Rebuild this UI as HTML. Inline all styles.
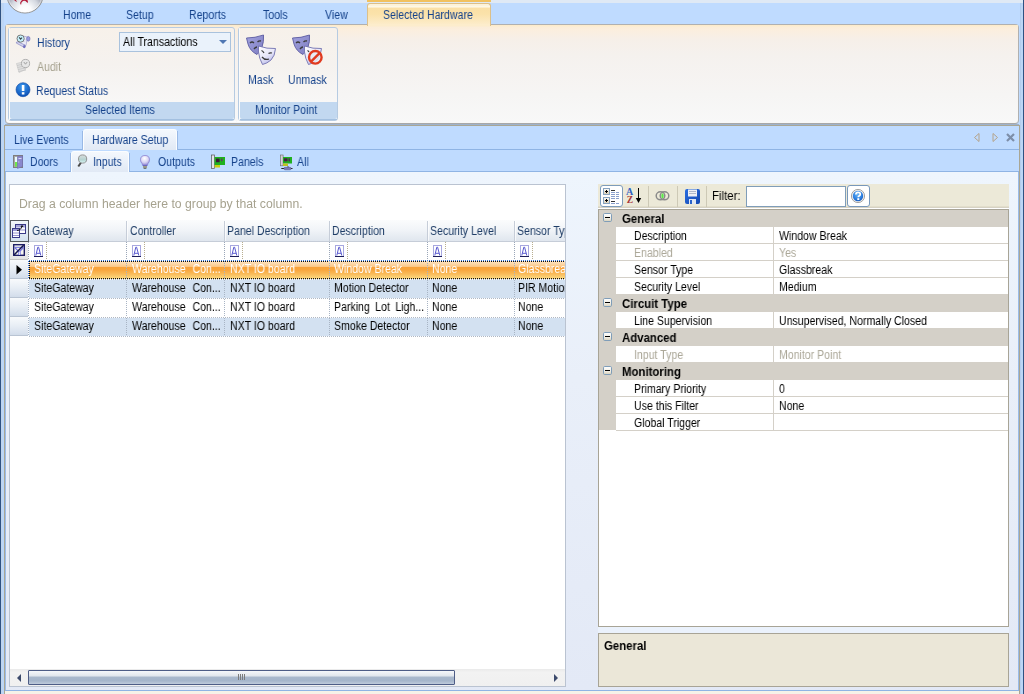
<!DOCTYPE html>
<html><head><meta charset="utf-8">
<style>
*{margin:0;padding:0;box-sizing:border-box}
html,body{-webkit-font-smoothing:antialiased;width:1024px;height:694px;overflow:hidden;background:#bfdbff;font-family:"Liberation Sans",sans-serif;font-size:11px;color:#000}
.a{position:absolute}
.t{position:absolute;white-space:nowrap;line-height:13px;font-size:12px;transform-origin:0 0;transform:scaleX(0.88);will-change:transform}
.bd{font-weight:bold;transform:scaleX(0.95)}
.b{color:#15428b}
svg{position:absolute;overflow:visible}
</style></head><body>

<div class="a" style="left:0px;top:0px;width:1024px;height:694px;background:#bfdbff"></div>
<div class="a" style="left:0px;top:0px;width:1024px;height:3px;background:#dfe9f5"></div>
<div class="a" style="left:1px;top:3px;width:3px;height:691px;background:#bcd6f6"></div>
<div class="a" style="left:1px;top:3px;width:1px;height:691px;background:#c0d4ec"></div>
<div class="a" style="left:1020px;top:3px;width:3px;height:691px;background:#bcd6f6"></div>
<div class="a" style="left:1020px;top:3px;width:1px;height:691px;background:#b4cdee"></div>
<div class="a" style="left:0px;top:0px;width:1px;height:694px;background:#2f5282"></div>
<div class="a" style="left:1023px;top:0px;width:1px;height:694px;background:#2f5282"></div>
<svg style="left:0;top:0" width="50" height="16">
<defs><radialGradient id="lg" cx="0.5" cy="0.95" r="0.5" fx="0.5" fy="0.95"><stop offset="0" stop-color="#ffffff"/><stop offset="0.35" stop-color="#fbfbfc"/><stop offset="0.8" stop-color="#d4d8e0"/><stop offset="1" stop-color="#b4b8c4"/></radialGradient></defs>
<circle cx="25" cy="-5" r="18" fill="url(#lg)" stroke="#909090" stroke-width="1"/><circle cx="25" cy="-5" r="17" fill="none" stroke="#ffffff" stroke-opacity="0.6" stroke-width="0.8"/>
<path d="M13 -1 Q15 1 17 2 L16 0 Z" fill="#b0203c"/>
<path d="M20 3 Q22 -1 25 -2 Q28 -1 28 3 L26.5 2 Q25 0 23 1 Q21 2 21 5 Z" fill="#b41c3a"/>
</svg>
<div class="t b" style="left:63px;top:9px;">Home</div>
<div class="t b" style="left:126px;top:9px;">Setup</div>
<div class="t b" style="left:189px;top:9px;">Reports</div>
<div class="t b" style="left:263px;top:9px;">Tools</div>
<div class="t b" style="left:325px;top:9px;">View</div>
<div class="a" style="left:367px;top:0px;width:124px;height:2px;background:#f1c15f"></div>
<div class="a" style="left:5px;top:124px;width:1014px;height:1px;background:#9db2cd"></div>
<div class="a" style="left:5px;top:24px;width:1014px;height:100px;border:1px solid #b0b0b0;border-bottom:1px solid #a8a8a8;border-radius:4px;background:linear-gradient(#fdeccc 0px,#fbeedd 4px,#f6efe8 14px,#f5f1ee 30px,#f6f5f4 70px,#f8f8f8)"></div>
<div class="a" style="left:6px;top:25px;width:1012px;height:3px;background:linear-gradient(#fdebc8,#fbeedd)"></div>
<div class="a" style="left:367px;top:3px;width:124px;height:23px;border:1px solid #dcc08a;border-bottom:none;border-radius:3px 3px 0 0;background:linear-gradient(#fdf2d6 0px,#fdf4dc 2px,#fffbef 3px,#fae0a6 4px,#fbe2aa 10px,#fce9c0 17px,#fdeecf 22px)"></div>
<div class="a" style="left:368px;top:24px;width:122px;height:2px;background:#fdedcc"></div>
<div class="t b" style="left:383px;top:9px;">Selected Hardware</div>
<div class="a" style="left:8px;top:27px;width:227px;height:94px;border:1px solid #b6cbe2;border-radius:3px;background:linear-gradient(#f7f1ea,#f5f2ef 40%,#f8f7f6 80%,#f9f9f9);overflow:hidden"></div>
<div class="a" style="left:9px;top:28px;width:1px;height:92px;background:#fdfdfd;opacity:0.8"></div>
<div class="a" style="left:10px;top:102px;width:224px;height:17px;background:#c2d8f0;border-radius:0 0 2px 2px"></div>
<div class="a" style="left:10px;top:119px;width:224px;height:1px;background:#a3c0e0"></div>
<div class="a" style="left:7px;top:121px;width:229px;height:1px;background:#fdfdfd"></div>
<div class="t b" style="left:85px;top:104px;">Selected Items</div>
<div class="a" style="left:238px;top:27px;width:100px;height:94px;border:1px solid #b6cbe2;border-radius:3px;background:linear-gradient(#f7f1ea,#f5f2ef 40%,#f8f7f6 80%,#f9f9f9);overflow:hidden"></div>
<div class="a" style="left:239px;top:28px;width:1px;height:92px;background:#fdfdfd;opacity:0.8"></div>
<div class="a" style="left:240px;top:102px;width:97px;height:17px;background:#c2d8f0;border-radius:0 0 2px 2px"></div>
<div class="a" style="left:240px;top:119px;width:97px;height:1px;background:#a3c0e0"></div>
<div class="a" style="left:237px;top:121px;width:102px;height:1px;background:#fdfdfd"></div>
<div class="t b" style="left:255px;top:104px;">Monitor Point</div>
<div class="t b" style="left:37px;top:37px;">History</div>
<div class="t " style="left:37px;top:61px;color:#a6a28f">Audit</div>
<div class="t b" style="left:36px;top:85px;">Request Status</div>
<div class="a" style="left:119px;top:32px;width:112px;height:20px;border:1px solid #a9c2dd;background:#eaf2fb"></div>
<div class="t " style="left:123px;top:36px;">All Transactions</div>
<svg style="left:219px;top:40px" width="9" height="5"><path d="M0 0 H8 L4 4 Z" fill="#4f77b3"/></svg>
<svg style="left:12px;top:30px" width="24" height="24">
<path d="M8 5.5 L15.5 7 L14 15.5 L7 13.5 Z" fill="#eeeef8" stroke="#a8a8d0" stroke-width="0.8"/>
<path d="M10 9 L14 10 M9.5 11 L13.5 12" stroke="#c8c8e4" stroke-width="0.6"/>
<ellipse cx="16.3" cy="8.8" rx="1.7" ry="2.4" fill="#9a9ae0" stroke="#6a6ab0" stroke-width="0.6"/>
<path d="M4.2 13 L11.5 17 Q13 17.8 13.2 16.2 L13 15 L6 11.8 Q4.3 11.5 4.2 13 Z" fill="#d4d4ee" stroke="#8a8ac4" stroke-width="0.7"/>
<ellipse cx="12.3" cy="16.6" rx="1.3" ry="1.6" fill="#7070c0"/>
<circle cx="8.6" cy="8.6" r="3.6" fill="#c4f0fa" stroke="#6e6e6e" stroke-width="0.9"/>
<path d="M7.2 7.3 L8.6 9.1 L10 7.7" fill="none" stroke="#3a4448" stroke-width="1.1"/>
</svg>
<svg style="left:15px;top:58px" width="18" height="18">
<path d="M1.5 5.5 L8 4 L11 11 L4 14.5 Z" fill="#e2e2e2" stroke="#c8c8c8" stroke-width="0.7"/>
<path d="M2 7.5 L8.5 6 M2.5 9.5 L9.5 8 M3 11.5 L10.5 10 M3.5 13.5 L11 12" stroke="#c4c4c4" stroke-width="0.8"/>
<circle cx="10.5" cy="5.5" r="4.1" fill="#e6e6e6" stroke="#a8a8a8" stroke-width="0.9"/>
<path d="M8.8 4 L10.5 6.2 L12.2 4" fill="none" stroke="#989898" stroke-width="0.9"/>
</svg>
<svg style="left:15px;top:82px" width="16" height="16">
<defs><radialGradient id="rs" cx="0.45" cy="0.3" r="0.7"><stop offset="0" stop-color="#3d9af0"/><stop offset="1" stop-color="#0a4fb5"/></radialGradient></defs>
<circle cx="8" cy="7.7" r="7" fill="url(#rs)" stroke="#0b4aa6" stroke-width="0.6"/>
<rect x="6.8" y="3" width="2.6" height="6" fill="#ffffff"/>
<rect x="6.8" y="10.2" width="2.6" height="2.3" fill="#ffffff"/>
</svg>
<svg style="left:244px;top:32px" width="36" height="36">
<defs>
<linearGradient id="mb244" x1="0" y1="0" x2="1" y2="1"><stop offset="0" stop-color="#a4a4e0"/><stop offset="1" stop-color="#7c7cc0"/></linearGradient>
<linearGradient id="mf244" x1="0" y1="0" x2="0.6" y2="1"><stop offset="0" stop-color="#ffffff"/><stop offset="0.6" stop-color="#e6e6f8"/><stop offset="1" stop-color="#b8b8e8"/></linearGradient>
</defs>
<path d="M2.5 6 Q11 6 19.5 3 Q20 10 18 15 Q16 20 13 22.5 Q6 19 4 12 Z" fill="url(#mb244)" stroke="#5a5aa0" stroke-width="0.9"/>
<path d="M6 11 Q8 9 10 11" fill="none" stroke="#3a3a3a" stroke-width="1.3"/>
<path d="M13.5 10 Q15 8.5 17 9" fill="none" stroke="#3a3a3a" stroke-width="1.3"/>
<path d="M10 17 Q11.5 15 13 15" fill="none" stroke="#3a3a3a" stroke-width="1.3"/>
<path d="M14.5 14 Q23 17 31.5 16.5 Q31 24 27 28 Q23 31.5 18.5 32.5 Q15 26 14.5 20 Z" fill="url(#mf244)" stroke="#7070b0" stroke-width="0.9"/>
<path d="M17.5 18.5 Q19 19 20 21" fill="none" stroke="#3a3a3a" stroke-width="1.2"/>
<path d="M24.5 21.5 Q26 20.5 28 21" fill="none" stroke="#3a3a3a" stroke-width="1.2"/>
<path d="M18 25 Q21 28.5 25 27" fill="none" stroke="#3a3a3a" stroke-width="1.3"/>
</svg>
<svg style="left:290px;top:32px" width="36" height="36">
<defs>
<linearGradient id="mb290" x1="0" y1="0" x2="1" y2="1"><stop offset="0" stop-color="#a4a4e0"/><stop offset="1" stop-color="#7c7cc0"/></linearGradient>
<linearGradient id="mf290" x1="0" y1="0" x2="0.6" y2="1"><stop offset="0" stop-color="#ffffff"/><stop offset="0.6" stop-color="#e6e6f8"/><stop offset="1" stop-color="#b8b8e8"/></linearGradient>
</defs>
<path d="M2.5 6 Q11 6 19.5 3 Q20 10 18 15 Q16 20 13 22.5 Q6 19 4 12 Z" fill="url(#mb290)" stroke="#5a5aa0" stroke-width="0.9"/>
<path d="M6 11 Q8 9 10 11" fill="none" stroke="#3a3a3a" stroke-width="1.3"/>
<path d="M13.5 10 Q15 8.5 17 9" fill="none" stroke="#3a3a3a" stroke-width="1.3"/>
<path d="M10 17 Q11.5 15 13 15" fill="none" stroke="#3a3a3a" stroke-width="1.3"/>
<path d="M14.5 14 Q23 17 31.5 16.5 Q31 24 27 28 Q23 31.5 18.5 32.5 Q15 26 14.5 20 Z" fill="url(#mf290)" stroke="#7070b0" stroke-width="0.9"/>
<path d="M17.5 18.5 Q18.5 19 19 20" fill="none" stroke="#3a3a3a" stroke-width="1.2"/>
<circle cx="25.3" cy="25.3" r="6.3" fill="#e8ecf4" fill-opacity="0.85" stroke="#e03a20" stroke-width="2.4"/>
<path d="M20.8 29.8 L29.8 20.8" stroke="#e03a20" stroke-width="2.4"/>
</svg>
<div class="t b" style="left:248px;top:74px;">Mask</div>
<div class="t b" style="left:288px;top:74px;">Unmask</div>
<div class="a" style="left:4px;top:125px;width:1016px;height:569px;background:#a9a694"></div>
<div class="a" style="left:5px;top:126px;width:1014px;height:568px;background:#bfdbff"></div>
<div class="a" style="left:5px;top:149px;width:1014px;height:1px;background:#8fb4e4"></div>
<div class="a" style="left:83px;top:129px;width:94px;height:21px;border:1px solid #fbfdff;border-bottom:none;border-radius:3px 3px 0 0;background:linear-gradient(#f4f8fd,#e8eff9 60%,#e1e9f5)"></div>
<div class="a" style="left:82px;top:131px;width:1px;height:19px;background:#99b9e6"></div>
<div class="a" style="left:177px;top:131px;width:1px;height:19px;background:#99b9e6"></div>
<div class="t b" style="left:14px;top:134px;">Live Events</div>
<div class="t b" style="left:92px;top:134px;">Hardware Setup</div>
<svg style="left:973px;top:132px" width="46" height="12">
<path d="M6 1.5 L1.5 5.5 L6 9.5 Z" fill="none" stroke="#b4a38a" stroke-width="1"/>
<path d="M20 1.5 L24.5 5.5 L20 9.5 Z" fill="none" stroke="#b4a38a" stroke-width="1"/>
<path d="M34 2 L41 9 M41 2 L34 9" stroke="#7d8ea8" stroke-width="2.2"/>
</svg>
<div class="a" style="left:5px;top:171px;width:1014px;height:1px;background:#8fb4e4"></div>
<div class="a" style="left:71px;top:151px;width:58px;height:21px;border:1px solid #fbfdff;border-bottom:none;border-radius:3px 3px 0 0;background:linear-gradient(#f4f8fd,#e8eff9 60%,#e1e9f5)"></div>
<div class="a" style="left:70px;top:153px;width:1px;height:18px;background:#99b9e6"></div>
<div class="a" style="left:129px;top:153px;width:1px;height:18px;background:#99b9e6"></div>
<div class="t b" style="left:30px;top:156px;">Doors</div>
<div class="t b" style="left:93px;top:156px;">Inputs</div>
<div class="t b" style="left:158px;top:156px;">Outputs</div>
<div class="t b" style="left:231px;top:156px;">Panels</div>
<div class="t b" style="left:297px;top:156px;">All</div>
<svg style="left:13px;top:155px" width="12" height="15">
<rect x="0.5" y="0.5" width="9" height="12" fill="#a8a8a8" stroke="#7e7e7e" stroke-width="1"/>
<rect x="2" y="2" width="2.5" height="5" fill="#e8fbff"/>
<rect x="2" y="7" width="2.5" height="4.5" fill="#6ee84a"/>
<path d="M4.5 1.5 L9.5 1 L9.5 11.5 L4.5 13.5 Z" fill="#8a88cc" stroke="#6a68b0" stroke-width="0.5"/>
<rect x="5.5" y="3" width="3" height="1" fill="#d8d8f4"/>
<rect x="5.3" y="6.5" width="1" height="1" fill="#e0e0e0"/>
</svg>
<svg style="left:76px;top:153px" width="14" height="16">
<defs><linearGradient id="mg" x1="0" y1="0" x2="0" y2="1"><stop offset="0" stop-color="#d8dcdc"/><stop offset="0.6" stop-color="#b4d2d0"/><stop offset="1" stop-color="#dcfbfa"/></linearGradient></defs>
<path d="M5 9.5 L2.3 13.5" stroke="#4a4a4a" stroke-width="2"/>
<circle cx="6.6" cy="6" r="4.1" fill="url(#mg)" stroke="#8a8a8a" stroke-width="0.9"/>
</svg>
<svg style="left:140px;top:155px" width="11" height="15">
<defs><radialGradient id="bl" cx="0.45" cy="0.3" r="0.7"><stop offset="0" stop-color="#ffffff"/><stop offset="0.6" stop-color="#d8d4f4"/><stop offset="1" stop-color="#9890d8"/></radialGradient></defs>
<path d="M5 0.5 Q9.5 0.5 9.5 4.8 Q9.5 7 7.8 8.8 L7.5 10 L2.5 10 L2.2 8.8 Q0.5 7 0.5 4.8 Q0.5 0.5 5 0.5 Z" fill="url(#bl)" stroke="#8a82d0" stroke-width="0.8"/>
<rect x="2.6" y="10" width="4.8" height="1" fill="#6a66c0"/>
<rect x="3" y="11" width="4" height="1.8" fill="#9c9a88"/>
<rect x="3.6" y="12.8" width="2.8" height="0.9" fill="#4a4a40"/>
</svg>
<svg style="left:211px;top:155px" width="15" height="14">
<rect x="0.5" y="0" width="3" height="13.5" fill="#e4e4e8" stroke="#555" stroke-width="0.7"/>
<rect x="3.6" y="2" width="10.4" height="8" fill="#1fb01f"/>
<rect x="3.6" y="10" width="5.4" height="2.5" fill="#c8d010"/>
<rect x="5" y="3.6" width="3.6" height="3.6" fill="#3a1838"/>
<rect x="10" y="3.6" width="1.4" height="2.6" fill="#6a2a6a"/>
</svg>
<svg style="left:280px;top:155px" width="14" height="15">
<rect x="0.5" y="0" width="2.6" height="10.8" fill="#d8d0d8" stroke="#666" stroke-width="0.6"/>
<rect x="3" y="2" width="9" height="6.5" fill="#20b020"/>
<rect x="3" y="8.5" width="5" height="2.5" fill="#c0c020"/>
<rect x="4" y="3.3" width="3.5" height="3" fill="#4a1a48"/>
<rect x="8.5" y="3.3" width="1.4" height="3" fill="#5a2058"/>
<path d="M8 11 L8 13" stroke="#333" stroke-width="0.8"/>
<path d="M1.3 13.5 L12.5 13.5" stroke="#222" stroke-width="1"/>
<rect x="4" y="12.3" width="7" height="2.5" rx="1" fill="#7a78b8" stroke="#54527a" stroke-width="0.5"/>
</svg>
<div class="a" style="left:5px;top:172px;width:1014px;height:518px;background:linear-gradient(#eef5fd,#e9eff9 40%,#e3e9f6)"></div>
<div class="a" style="left:5px;top:172px;width:1px;height:518px;background:#99bbe8"></div>
<div class="a" style="left:1018px;top:172px;width:1px;height:518px;background:#99bbe8"></div>
<div class="a" style="left:5px;top:690px;width:1014px;height:1px;background:#8fb4e4"></div>
<div class="a" style="left:5px;top:691px;width:1014px;height:3px;background:#f6f2e8"></div>
<div class="a" style="left:9px;top:184px;width:557px;height:503px;border:1px solid #bac3d1;background:#fff"></div>
<div class="t " style="left:19px;top:198px;color:#a6a28f;transform:scaleX(1.02)">Drag a column header here to group by that column.</div>
<div class="a" style="left:10px;top:220px;width:555px;height:22px;background:linear-gradient(#fbfcfd,#f1f4f8 45%,#e3e9f0 85%,#dfe5ee)"></div>
<div class="a" style="left:10px;top:241px;width:555px;height:1px;background:#c6cdd8"></div>
<div class="a" style="left:126px;top:221px;width:1px;height:20px;background:#c6cdd8"></div>
<div class="a" style="left:127px;top:221px;width:1px;height:20px;background:#ffffff;opacity:0.7"></div>
<div class="a" style="left:224px;top:221px;width:1px;height:20px;background:#c6cdd8"></div>
<div class="a" style="left:225px;top:221px;width:1px;height:20px;background:#ffffff;opacity:0.7"></div>
<div class="a" style="left:329px;top:221px;width:1px;height:20px;background:#c6cdd8"></div>
<div class="a" style="left:330px;top:221px;width:1px;height:20px;background:#ffffff;opacity:0.7"></div>
<div class="a" style="left:427px;top:221px;width:1px;height:20px;background:#c6cdd8"></div>
<div class="a" style="left:428px;top:221px;width:1px;height:20px;background:#ffffff;opacity:0.7"></div>
<div class="a" style="left:514px;top:221px;width:1px;height:20px;background:#c6cdd8"></div>
<div class="a" style="left:515px;top:221px;width:1px;height:20px;background:#ffffff;opacity:0.7"></div>
<div class="a" style="left:10px;top:220px;width:19px;height:22px;border:1px solid #555a60;background:linear-gradient(#f2f6fa,#d4e2ef)"></div>
<svg style="left:11px;top:222px" width="17" height="18">
<rect x="4.5" y="2.5" width="10" height="9" fill="#ffffff" stroke="#3a3a88" stroke-width="1"/>
<rect x="5" y="3" width="9" height="2.5" fill="#a4a4d8"/>
<path d="M5 8 H14" stroke="#7878c0" stroke-width="0.8"/>
<rect x="1.5" y="6.5" width="7" height="9" fill="#ffffff" stroke="#3a3a88" stroke-width="1"/>
<rect x="2" y="7" width="6" height="2" fill="#9a9ad4"/>
<path d="M2 11 H8 M2 13.5 H8" stroke="#7878c0" stroke-width="0.8"/>
<path d="M6 8.5 Q10 8.5 11 4" fill="none" stroke="#1a1a1a" stroke-width="1"/>
<path d="M9.5 5 L11 2.8 L12.6 5 Z" fill="#1a1a1a"/>
</svg>
<div class="a" style="left:10px;top:220px;width:555px;height:22px;overflow:hidden">
<div class="t" style="left:22px;top:5px;color:#1f3d66">Gateway</div>
<div class="t" style="left:120px;top:5px;color:#1f3d66">Controller</div>
<div class="t" style="left:217px;top:5px;color:#1f3d66">Panel Description</div>
<div class="t" style="left:322px;top:5px;color:#1f3d66">Description</div>
<div class="t" style="left:420px;top:5px;color:#1f3d66">Security Level</div>
<div class="t" style="left:507px;top:5px;color:#1f3d66">Sensor Type</div>
</div>
<div class="a" style="left:10px;top:242px;width:18px;height:18px;background:linear-gradient(#f2f2f2,#e4e4e4);border-bottom:1px solid #c4c4c4"></div>
<svg style="left:13px;top:244px" width="13" height="13">
<rect x="0.7" y="0.7" width="10.6" height="10.6" fill="#f6f5ee" stroke="#1e1e66" stroke-width="1.4"/>
<path d="M1.4 3.3 H10.6" stroke="#6464d8" stroke-width="1"/>
<path d="M2 3.8 L5.8 7.6 V11 M10.2 3.8 L7 7.2 V11" fill="none" stroke="#6a6ae0" stroke-width="1.2"/>
<rect x="5.8" y="7.6" width="1.2" height="3.4" fill="#dcdcf8"/>
<path d="M1 11 L10.6 1.2" stroke="#16164a" stroke-width="1.5"/>
</svg>
<div class="a" style="left:28px;top:242px;width:1px;height:18px;background:repeating-linear-gradient(#9aa6b8 0 1px,transparent 1px 2px)"></div>
<div class="a" style="left:46px;top:242px;width:1px;height:18px;background:repeating-linear-gradient(#b8ae90 0 1px,transparent 1px 2px)"></div>
<svg style="left:34px;top:245px" width="10" height="12">
<rect x="0.5" y="0.5" width="8" height="11" fill="#ffffff" stroke="#a8a8e0" stroke-width="1"/>
<path d="M1.8 10.5 L3.8 2.2 L4.6 2.2 L6.8 10.5 M2.5 8.3 H6.2" fill="none" stroke="#5a5ad0" stroke-width="1"/>
<rect x="0" y="11" width="9" height="1" fill="#1e1e5a"/>
</svg>
<div class="a" style="left:126px;top:242px;width:1px;height:18px;background:repeating-linear-gradient(#9aa6b8 0 1px,transparent 1px 2px)"></div>
<div class="a" style="left:144px;top:242px;width:1px;height:18px;background:repeating-linear-gradient(#b8ae90 0 1px,transparent 1px 2px)"></div>
<svg style="left:132px;top:245px" width="10" height="12">
<rect x="0.5" y="0.5" width="8" height="11" fill="#ffffff" stroke="#a8a8e0" stroke-width="1"/>
<path d="M1.8 10.5 L3.8 2.2 L4.6 2.2 L6.8 10.5 M2.5 8.3 H6.2" fill="none" stroke="#5a5ad0" stroke-width="1"/>
<rect x="0" y="11" width="9" height="1" fill="#1e1e5a"/>
</svg>
<div class="a" style="left:224px;top:242px;width:1px;height:18px;background:repeating-linear-gradient(#9aa6b8 0 1px,transparent 1px 2px)"></div>
<div class="a" style="left:242px;top:242px;width:1px;height:18px;background:repeating-linear-gradient(#b8ae90 0 1px,transparent 1px 2px)"></div>
<svg style="left:230px;top:245px" width="10" height="12">
<rect x="0.5" y="0.5" width="8" height="11" fill="#ffffff" stroke="#a8a8e0" stroke-width="1"/>
<path d="M1.8 10.5 L3.8 2.2 L4.6 2.2 L6.8 10.5 M2.5 8.3 H6.2" fill="none" stroke="#5a5ad0" stroke-width="1"/>
<rect x="0" y="11" width="9" height="1" fill="#1e1e5a"/>
</svg>
<div class="a" style="left:329px;top:242px;width:1px;height:18px;background:repeating-linear-gradient(#9aa6b8 0 1px,transparent 1px 2px)"></div>
<div class="a" style="left:347px;top:242px;width:1px;height:18px;background:repeating-linear-gradient(#b8ae90 0 1px,transparent 1px 2px)"></div>
<svg style="left:335px;top:245px" width="10" height="12">
<rect x="0.5" y="0.5" width="8" height="11" fill="#ffffff" stroke="#a8a8e0" stroke-width="1"/>
<path d="M1.8 10.5 L3.8 2.2 L4.6 2.2 L6.8 10.5 M2.5 8.3 H6.2" fill="none" stroke="#5a5ad0" stroke-width="1"/>
<rect x="0" y="11" width="9" height="1" fill="#1e1e5a"/>
</svg>
<div class="a" style="left:427px;top:242px;width:1px;height:18px;background:repeating-linear-gradient(#9aa6b8 0 1px,transparent 1px 2px)"></div>
<div class="a" style="left:445px;top:242px;width:1px;height:18px;background:repeating-linear-gradient(#b8ae90 0 1px,transparent 1px 2px)"></div>
<svg style="left:433px;top:245px" width="10" height="12">
<rect x="0.5" y="0.5" width="8" height="11" fill="#ffffff" stroke="#a8a8e0" stroke-width="1"/>
<path d="M1.8 10.5 L3.8 2.2 L4.6 2.2 L6.8 10.5 M2.5 8.3 H6.2" fill="none" stroke="#5a5ad0" stroke-width="1"/>
<rect x="0" y="11" width="9" height="1" fill="#1e1e5a"/>
</svg>
<div class="a" style="left:514px;top:242px;width:1px;height:18px;background:repeating-linear-gradient(#9aa6b8 0 1px,transparent 1px 2px)"></div>
<div class="a" style="left:532px;top:242px;width:1px;height:18px;background:repeating-linear-gradient(#b8ae90 0 1px,transparent 1px 2px)"></div>
<svg style="left:520px;top:245px" width="10" height="12">
<rect x="0.5" y="0.5" width="8" height="11" fill="#ffffff" stroke="#a8a8e0" stroke-width="1"/>
<path d="M1.8 10.5 L3.8 2.2 L4.6 2.2 L6.8 10.5 M2.5 8.3 H6.2" fill="none" stroke="#5a5ad0" stroke-width="1"/>
<rect x="0" y="11" width="9" height="1" fill="#1e1e5a"/>
</svg>
<div class="a" style="left:10px;top:260px;width:18px;height:19px;background:linear-gradient(#f8fafc,#e8eef5 45%,#d9e2ee 80%,#cfdae8)"></div>
<div class="a" style="left:10px;top:278px;width:18px;height:1px;background:#b9c4d3"></div>
<div class="a" style="left:29px;top:261px;width:536px;height:18px;background:linear-gradient(#fde4c4 0px,#fcd6a6 3px,#fbc888 5.5px,#f8a23a 6.5px,#f8a63e 9px,#f9bb5a 13px,#fcd67c 17px,#fde0a0 18px)"></div>
<div class="a" style="left:29px;top:261px;width:536px;height:1px;background:repeating-linear-gradient(90deg,#101010 0 1px,transparent 1px 2px)"></div>
<div class="a" style="left:29px;top:278px;width:536px;height:1px;background:repeating-linear-gradient(90deg,#101010 0 1px,transparent 1px 2px)"></div>
<div class="a" style="left:29px;top:260px;width:536px;height:1px;background:repeating-linear-gradient(90deg,#3a78d8 0 1px,transparent 1px 2px)"></div>
<div class="a" style="left:28px;top:261px;width:1px;height:18px;background:repeating-linear-gradient(#3a78d8 0 1px,transparent 1px 2px)"></div>
<div class="a" style="left:29px;top:261px;width:1px;height:18px;background:repeating-linear-gradient(#101010 0 1px,transparent 1px 2px)"></div>
<svg style="left:16px;top:265px" width="7" height="10"><path d="M0.5 0 L6 4.8 L0.5 9.6 Z" fill="#000"/></svg>
<div class="a" style="left:126px;top:261px;width:1px;height:18px;background:repeating-linear-gradient(#a8b4c4 0 1px,transparent 1px 2px)"></div>
<div class="a" style="left:224px;top:261px;width:1px;height:18px;background:repeating-linear-gradient(#a8b4c4 0 1px,transparent 1px 2px)"></div>
<div class="a" style="left:329px;top:261px;width:1px;height:18px;background:repeating-linear-gradient(#a8b4c4 0 1px,transparent 1px 2px)"></div>
<div class="a" style="left:427px;top:261px;width:1px;height:18px;background:repeating-linear-gradient(#a8b4c4 0 1px,transparent 1px 2px)"></div>
<div class="a" style="left:514px;top:261px;width:1px;height:18px;background:repeating-linear-gradient(#a8b4c4 0 1px,transparent 1px 2px)"></div>
<div class="a" style="left:29px;top:260px;width:536px;height:19px;overflow:hidden">
<div class="t" style="left:5px;top:3px;color:#ffffff">SiteGateway</div>
<div class="t" style="left:103px;top:3px;color:#ffffff">Warehouse<span style='word-spacing:4.5px'> </span>Con...</div>
<div class="t" style="left:201px;top:3px;color:#ffffff">NXT IO board</div>
<div class="t" style="left:305px;top:3px;color:#ffffff">Window Break</div>
<div class="t" style="left:403px;top:3px;color:#ffffff">None</div>
<div class="t" style="left:489px;top:3px;color:#ffffff">Glassbreak</div>
</div>
<div class="a" style="left:10px;top:279px;width:18px;height:19px;background:linear-gradient(#f8fafc,#e8eef5 45%,#d9e2ee 80%,#cfdae8)"></div>
<div class="a" style="left:10px;top:297px;width:18px;height:1px;background:#b9c4d3"></div>
<div class="a" style="left:29px;top:280px;width:536px;height:18px;background:#d3e1f1"></div>
<div class="a" style="left:29px;top:279px;width:536px;height:1px;background:repeating-linear-gradient(90deg,#b0b8c4 0 1px,transparent 1px 2px)"></div>
<div class="a" style="left:28px;top:280px;width:1px;height:18px;background:repeating-linear-gradient(#a8b4c4 0 1px,transparent 1px 2px)"></div>
<div class="a" style="left:126px;top:280px;width:1px;height:18px;background:repeating-linear-gradient(#a8b4c4 0 1px,transparent 1px 2px)"></div>
<div class="a" style="left:224px;top:280px;width:1px;height:18px;background:repeating-linear-gradient(#a8b4c4 0 1px,transparent 1px 2px)"></div>
<div class="a" style="left:329px;top:280px;width:1px;height:18px;background:repeating-linear-gradient(#a8b4c4 0 1px,transparent 1px 2px)"></div>
<div class="a" style="left:427px;top:280px;width:1px;height:18px;background:repeating-linear-gradient(#a8b4c4 0 1px,transparent 1px 2px)"></div>
<div class="a" style="left:514px;top:280px;width:1px;height:18px;background:repeating-linear-gradient(#a8b4c4 0 1px,transparent 1px 2px)"></div>
<div class="a" style="left:29px;top:279px;width:536px;height:19px;overflow:hidden">
<div class="t" style="left:5px;top:3px;color:#000">SiteGateway</div>
<div class="t" style="left:103px;top:3px;color:#000">Warehouse<span style='word-spacing:4.5px'> </span>Con...</div>
<div class="t" style="left:201px;top:3px;color:#000">NXT IO board</div>
<div class="t" style="left:305px;top:3px;color:#000">Motion Detector</div>
<div class="t" style="left:403px;top:3px;color:#000">None</div>
<div class="t" style="left:489px;top:3px;color:#000">PIR Motion</div>
</div>
<div class="a" style="left:10px;top:298px;width:18px;height:19px;background:linear-gradient(#f8fafc,#e8eef5 45%,#d9e2ee 80%,#cfdae8)"></div>
<div class="a" style="left:10px;top:316px;width:18px;height:1px;background:#b9c4d3"></div>
<div class="a" style="left:29px;top:299px;width:536px;height:18px;background:#ffffff"></div>
<div class="a" style="left:29px;top:298px;width:536px;height:1px;background:repeating-linear-gradient(90deg,#b0b8c4 0 1px,transparent 1px 2px)"></div>
<div class="a" style="left:28px;top:299px;width:1px;height:18px;background:repeating-linear-gradient(#a8b4c4 0 1px,transparent 1px 2px)"></div>
<div class="a" style="left:126px;top:299px;width:1px;height:18px;background:repeating-linear-gradient(#a8b4c4 0 1px,transparent 1px 2px)"></div>
<div class="a" style="left:224px;top:299px;width:1px;height:18px;background:repeating-linear-gradient(#a8b4c4 0 1px,transparent 1px 2px)"></div>
<div class="a" style="left:329px;top:299px;width:1px;height:18px;background:repeating-linear-gradient(#a8b4c4 0 1px,transparent 1px 2px)"></div>
<div class="a" style="left:427px;top:299px;width:1px;height:18px;background:repeating-linear-gradient(#a8b4c4 0 1px,transparent 1px 2px)"></div>
<div class="a" style="left:514px;top:299px;width:1px;height:18px;background:repeating-linear-gradient(#a8b4c4 0 1px,transparent 1px 2px)"></div>
<div class="a" style="left:29px;top:298px;width:536px;height:19px;overflow:hidden">
<div class="t" style="left:5px;top:3px;color:#000">SiteGateway</div>
<div class="t" style="left:103px;top:3px;color:#000">Warehouse<span style='word-spacing:4.5px'> </span>Con...</div>
<div class="t" style="left:201px;top:3px;color:#000">NXT IO board</div>
<div class="t" style="left:305px;top:3px;color:#000"><span style='word-spacing:2.8px'>Parking Lot Ligh...</span></div>
<div class="t" style="left:403px;top:3px;color:#000">None</div>
<div class="t" style="left:489px;top:3px;color:#000">None</div>
</div>
<div class="a" style="left:10px;top:317px;width:18px;height:19px;background:linear-gradient(#f8fafc,#e8eef5 45%,#d9e2ee 80%,#cfdae8)"></div>
<div class="a" style="left:10px;top:335px;width:18px;height:1px;background:#b9c4d3"></div>
<div class="a" style="left:29px;top:318px;width:536px;height:18px;background:#d3e1f1"></div>
<div class="a" style="left:29px;top:317px;width:536px;height:1px;background:repeating-linear-gradient(90deg,#b0b8c4 0 1px,transparent 1px 2px)"></div>
<div class="a" style="left:28px;top:318px;width:1px;height:18px;background:repeating-linear-gradient(#a8b4c4 0 1px,transparent 1px 2px)"></div>
<div class="a" style="left:126px;top:318px;width:1px;height:18px;background:repeating-linear-gradient(#a8b4c4 0 1px,transparent 1px 2px)"></div>
<div class="a" style="left:224px;top:318px;width:1px;height:18px;background:repeating-linear-gradient(#a8b4c4 0 1px,transparent 1px 2px)"></div>
<div class="a" style="left:329px;top:318px;width:1px;height:18px;background:repeating-linear-gradient(#a8b4c4 0 1px,transparent 1px 2px)"></div>
<div class="a" style="left:427px;top:318px;width:1px;height:18px;background:repeating-linear-gradient(#a8b4c4 0 1px,transparent 1px 2px)"></div>
<div class="a" style="left:514px;top:318px;width:1px;height:18px;background:repeating-linear-gradient(#a8b4c4 0 1px,transparent 1px 2px)"></div>
<div class="a" style="left:29px;top:317px;width:536px;height:19px;overflow:hidden">
<div class="t" style="left:5px;top:3px;color:#000">SiteGateway</div>
<div class="t" style="left:103px;top:3px;color:#000">Warehouse<span style='word-spacing:4.5px'> </span>Con...</div>
<div class="t" style="left:201px;top:3px;color:#000">NXT IO board</div>
<div class="t" style="left:305px;top:3px;color:#000">Smoke Detector</div>
<div class="t" style="left:403px;top:3px;color:#000">None</div>
<div class="t" style="left:489px;top:3px;color:#000">None</div>
</div>
<div class="a" style="left:29px;top:336px;width:536px;height:1px;background:repeating-linear-gradient(90deg,#b0b8c4 0 1px,transparent 1px 2px)"></div>
<div class="a" style="left:10px;top:669px;width:555px;height:17px;background:linear-gradient(#eaeaea,#f2f2f2 20%,#f0f0f0)"></div>
<svg style="left:16px;top:674px" width="6" height="8"><path d="M5 0 L1 4 L5 8 Z" fill="#3c4a6c"/></svg>
<svg style="left:554px;top:674px" width="6" height="8"><path d="M0 0 L4 4 L0 8 Z" fill="#3c4a6c"/></svg>
<div class="a" style="left:28px;top:670px;width:427px;height:15px;border:1px solid #4e5d86;border-radius:1px;background:linear-gradient(#f6f8fa,#e3e8ee 35%,#a9b8cc 50%,#a5b5ca 75%,#bfcbdb)"></div>
<div class="a" style="left:238px;top:674px;width:1px;height:6px;background:#7c7c7c"></div>
<div class="a" style="left:240px;top:674px;width:1px;height:6px;background:#7c7c7c"></div>
<div class="a" style="left:242px;top:674px;width:1px;height:6px;background:#7c7c7c"></div>
<div class="a" style="left:244px;top:674px;width:1px;height:6px;background:#7c7c7c"></div>
<div class="a" style="left:598px;top:184px;width:411px;height:23px;background:#ece9d8"></div>
<div class="a" style="left:598px;top:206px;width:411px;height:1px;background:#e2decb"></div>
<div class="a" style="left:598px;top:207px;width:411px;height:1px;background:#d6d2c4"></div>
<div class="a" style="left:598px;top:208px;width:411px;height:1px;background:#ffffff"></div>
<div class="a" style="left:598px;top:209px;width:411px;height:418px;background:#fff"></div>
<div class="a" style="left:600px;top:185px;width:23px;height:22px;border:1px solid #7d9cbb;border-radius:3px;background:#ffffff"></div>
<svg style="left:600px;top:185px" width="45" height="22" shape-rendering="crispEdges">
<defs><linearGradient id="pb" x1="0" y1="0" x2="0" y2="1"><stop offset="0" stop-color="#ffffff"/><stop offset="1" stop-color="#d8ccb0"/></linearGradient></defs>
<rect x="3.5" y="3.5" width="6" height="6" rx="1" fill="url(#pb)" stroke="#87a3c0" stroke-width="1"/>
<rect x="5" y="6" width="3" height="1" fill="#000"/><rect x="6" y="5" width="1" height="3" fill="#000"/>
<rect x="3.5" y="12.5" width="6" height="6" rx="1" fill="url(#pb)" stroke="#87a3c0" stroke-width="1"/>
<rect x="5" y="15" width="3" height="1" fill="#000"/><rect x="6" y="14" width="1" height="3" fill="#000"/>
<rect x="11" y="5" width="4" height="1" fill="#333"/>
<rect x="11" y="16" width="4" height="1" fill="#333"/>
<rect x="11" y="7" width="4" height="1" fill="#8aa0cc"/><rect x="16" y="7" width="3" height="1" fill="#8aa0cc"/>
<rect x="11" y="9" width="4" height="1" fill="#8aa0cc"/><rect x="16" y="9" width="3" height="1" fill="#8aa0cc"/>
<rect x="11" y="11" width="4" height="1" fill="#8aa0cc"/><rect x="16" y="11" width="3" height="1" fill="#8aa0cc"/>
<rect x="11" y="13" width="4" height="1" fill="#8aa0cc"/><rect x="16" y="13" width="3" height="1" fill="#8aa0cc"/>
<rect x="11" y="18" width="4" height="1" fill="#8aa0cc"/><rect x="16" y="18" width="3" height="1" fill="#8aa0cc"/>
</svg>
<svg style="left:625px;top:186px" width="18" height="18">
<text x="4.5" y="9" text-anchor="middle" font-family="Liberation Serif" font-weight="bold" font-size="10" fill="#2f5fc0">A</text>
<text x="4.8" y="17" text-anchor="middle" font-family="Liberation Serif" font-weight="bold" font-size="9.5" fill="#a83838">Z</text>
<rect x="13" y="2" width="1" height="13" fill="#000"/>
<path d="M10.8 12 L13.5 17 L16.2 12 Z" fill="#000"/>
</svg>
<div class="a" style="left:648px;top:186px;width:1px;height:21px;background:#cdc9b6"></div>
<div class="a" style="left:677px;top:186px;width:1px;height:21px;background:#cdc9b6"></div>
<div class="a" style="left:706px;top:186px;width:1px;height:21px;background:#cdc9b6"></div>
<svg style="left:655px;top:190px" width="17" height="12">
<ellipse cx="5.5" cy="5.8" rx="4.3" ry="4" fill="none" stroke="#8a8a8a" stroke-width="1.5"/>
<ellipse cx="9.5" cy="5.8" rx="4.3" ry="4" fill="none" stroke="#8a8a8a" stroke-width="1.5"/>
<ellipse cx="7.5" cy="5.8" rx="1.2" ry="2.6" fill="#5ae84a"/>
</svg>
<svg style="left:685px;top:189px" width="15" height="15">
<defs><linearGradient id="sv" x1="0" y1="0" x2="1" y2="1"><stop offset="0" stop-color="#2a6ee0"/><stop offset="1" stop-color="#1448b0"/></linearGradient></defs>
<rect x="0" y="0" width="15" height="15" rx="2" fill="url(#sv)"/>
<rect x="3" y="0.5" width="9" height="7" fill="#eef0f4"/>
<rect x="4" y="2" width="7" height="1" fill="#b0b8c8"/><rect x="4" y="4" width="7" height="1" fill="#b0b8c8"/>
<rect x="4" y="10" width="7" height="5" fill="#dfe6f2"/>
<rect x="5" y="11" width="2" height="4" fill="#2a62c8"/>
</svg>
<div class="t " style="left:712px;top:190px;transform:scaleX(0.95)">Filter:</div>
<div class="a" style="left:746px;top:186px;width:100px;height:21px;border:1px solid #7f9db9;background:#fff"></div>
<div class="a" style="left:847px;top:185px;width:23px;height:22px;border:1px solid #7898bb;border-radius:3px;background:#ffffff"></div>
<svg style="left:850px;top:188px" width="16" height="16">
<defs><radialGradient id="hg" cx="0.45" cy="0.35" r="0.65"><stop offset="0" stop-color="#6ab4f4"/><stop offset="0.7" stop-color="#2a7ee0"/><stop offset="1" stop-color="#1a5cc0"/></radialGradient></defs>
<circle cx="8" cy="8" r="6.6" fill="#eeeeee" stroke="#9a9a9a" stroke-width="0.9"/>
<circle cx="8" cy="8" r="5.2" fill="url(#hg)"/>
<path d="M5.9 6.4 Q5.9 4.3 8.1 4.3 Q10.3 4.3 10.3 6.2 Q10.3 7.3 9 7.9 Q8.3 8.3 8.3 9.2" fill="none" stroke="#ffffff" stroke-width="1.7"/>
<rect x="7.3" y="10.2" width="2" height="1.8" fill="#ffffff"/>
</svg>
<div class="a" style="left:599px;top:209px;width:409px;height:17px;background:#d4d0c8"></div>
<svg style="left:603px;top:213px" width="9" height="9">
<defs><linearGradient id="mb0" x1="0" y1="0" x2="0" y2="1"><stop offset="0" stop-color="#ffffff"/><stop offset="0.6" stop-color="#f0ede4"/><stop offset="1" stop-color="#d6cfb8"/></linearGradient></defs>
<rect x="0.5" y="0.5" width="8" height="8" rx="1.2" fill="url(#mb0)" stroke="#7f9db9" stroke-width="1"/>
<path d="M2 4.5 H7" stroke="#000" stroke-width="1"/>
</svg>
<div class="t bd" style="left:622px;top:213px;">General</div>
<div class="a" style="left:599px;top:226px;width:17px;height:17px;background:#d4d0c8"></div>
<div class="a" style="left:616px;top:226px;width:392px;height:1px;background:#d4d0c8"></div>
<div class="a" style="left:616px;top:243px;width:392px;height:1px;background:#d4d0c8"></div>
<div class="a" style="left:773px;top:227px;width:1px;height:16px;background:#d4d0c8"></div>
<div class="t " style="left:634px;top:230px;color:#000">Description</div>
<div class="t " style="left:779px;top:230px;color:#000">Window Break</div>
<div class="a" style="left:599px;top:243px;width:17px;height:17px;background:#d4d0c8"></div>
<div class="a" style="left:616px;top:243px;width:392px;height:1px;background:#d4d0c8"></div>
<div class="a" style="left:616px;top:260px;width:392px;height:1px;background:#d4d0c8"></div>
<div class="a" style="left:773px;top:244px;width:1px;height:16px;background:#d4d0c8"></div>
<div class="t " style="left:634px;top:247px;color:#aca899">Enabled</div>
<div class="t " style="left:779px;top:247px;color:#aca899">Yes</div>
<div class="a" style="left:599px;top:260px;width:17px;height:17px;background:#d4d0c8"></div>
<div class="a" style="left:616px;top:260px;width:392px;height:1px;background:#d4d0c8"></div>
<div class="a" style="left:616px;top:277px;width:392px;height:1px;background:#d4d0c8"></div>
<div class="a" style="left:773px;top:261px;width:1px;height:16px;background:#d4d0c8"></div>
<div class="t " style="left:634px;top:264px;color:#000">Sensor Type</div>
<div class="t " style="left:779px;top:264px;color:#000">Glassbreak</div>
<div class="a" style="left:599px;top:277px;width:17px;height:17px;background:#d4d0c8"></div>
<div class="a" style="left:616px;top:277px;width:392px;height:1px;background:#d4d0c8"></div>
<div class="a" style="left:616px;top:294px;width:392px;height:1px;background:#d4d0c8"></div>
<div class="a" style="left:773px;top:278px;width:1px;height:16px;background:#d4d0c8"></div>
<div class="t " style="left:634px;top:281px;color:#000">Security Level</div>
<div class="t " style="left:779px;top:281px;color:#000">Medium</div>
<div class="a" style="left:599px;top:294px;width:409px;height:17px;background:#d4d0c8"></div>
<svg style="left:603px;top:298px" width="9" height="9">
<defs><linearGradient id="mb5" x1="0" y1="0" x2="0" y2="1"><stop offset="0" stop-color="#ffffff"/><stop offset="0.6" stop-color="#f0ede4"/><stop offset="1" stop-color="#d6cfb8"/></linearGradient></defs>
<rect x="0.5" y="0.5" width="8" height="8" rx="1.2" fill="url(#mb5)" stroke="#7f9db9" stroke-width="1"/>
<path d="M2 4.5 H7" stroke="#000" stroke-width="1"/>
</svg>
<div class="t bd" style="left:622px;top:298px;">Circuit Type</div>
<div class="a" style="left:599px;top:311px;width:17px;height:17px;background:#d4d0c8"></div>
<div class="a" style="left:616px;top:311px;width:392px;height:1px;background:#d4d0c8"></div>
<div class="a" style="left:616px;top:328px;width:392px;height:1px;background:#d4d0c8"></div>
<div class="a" style="left:773px;top:312px;width:1px;height:16px;background:#d4d0c8"></div>
<div class="t " style="left:634px;top:315px;color:#000">Line Supervision</div>
<div class="t " style="left:779px;top:315px;color:#000">Unsupervised, Normally Closed</div>
<div class="a" style="left:599px;top:328px;width:409px;height:17px;background:#d4d0c8"></div>
<svg style="left:603px;top:332px" width="9" height="9">
<defs><linearGradient id="mb7" x1="0" y1="0" x2="0" y2="1"><stop offset="0" stop-color="#ffffff"/><stop offset="0.6" stop-color="#f0ede4"/><stop offset="1" stop-color="#d6cfb8"/></linearGradient></defs>
<rect x="0.5" y="0.5" width="8" height="8" rx="1.2" fill="url(#mb7)" stroke="#7f9db9" stroke-width="1"/>
<path d="M2 4.5 H7" stroke="#000" stroke-width="1"/>
</svg>
<div class="t bd" style="left:622px;top:332px;">Advanced</div>
<div class="a" style="left:599px;top:345px;width:17px;height:17px;background:#d4d0c8"></div>
<div class="a" style="left:616px;top:345px;width:392px;height:1px;background:#d4d0c8"></div>
<div class="a" style="left:616px;top:362px;width:392px;height:1px;background:#d4d0c8"></div>
<div class="a" style="left:773px;top:346px;width:1px;height:16px;background:#d4d0c8"></div>
<div class="t " style="left:634px;top:349px;color:#aca899">Input Type</div>
<div class="t " style="left:779px;top:349px;color:#aca899">Monitor Point</div>
<div class="a" style="left:599px;top:362px;width:409px;height:17px;background:#d4d0c8"></div>
<svg style="left:603px;top:366px" width="9" height="9">
<defs><linearGradient id="mb9" x1="0" y1="0" x2="0" y2="1"><stop offset="0" stop-color="#ffffff"/><stop offset="0.6" stop-color="#f0ede4"/><stop offset="1" stop-color="#d6cfb8"/></linearGradient></defs>
<rect x="0.5" y="0.5" width="8" height="8" rx="1.2" fill="url(#mb9)" stroke="#7f9db9" stroke-width="1"/>
<path d="M2 4.5 H7" stroke="#000" stroke-width="1"/>
</svg>
<div class="t bd" style="left:622px;top:366px;">Monitoring</div>
<div class="a" style="left:599px;top:379px;width:17px;height:17px;background:#d4d0c8"></div>
<div class="a" style="left:616px;top:379px;width:392px;height:1px;background:#d4d0c8"></div>
<div class="a" style="left:616px;top:396px;width:392px;height:1px;background:#d4d0c8"></div>
<div class="a" style="left:773px;top:380px;width:1px;height:16px;background:#d4d0c8"></div>
<div class="t " style="left:634px;top:383px;color:#000">Primary Priority</div>
<div class="t " style="left:779px;top:383px;color:#000">0</div>
<div class="a" style="left:599px;top:396px;width:17px;height:17px;background:#d4d0c8"></div>
<div class="a" style="left:616px;top:396px;width:392px;height:1px;background:#d4d0c8"></div>
<div class="a" style="left:616px;top:413px;width:392px;height:1px;background:#d4d0c8"></div>
<div class="a" style="left:773px;top:397px;width:1px;height:16px;background:#d4d0c8"></div>
<div class="t " style="left:634px;top:400px;color:#000">Use this Filter</div>
<div class="t " style="left:779px;top:400px;color:#000">None</div>
<div class="a" style="left:599px;top:413px;width:17px;height:17px;background:#d4d0c8"></div>
<div class="a" style="left:616px;top:413px;width:392px;height:1px;background:#d4d0c8"></div>
<div class="a" style="left:616px;top:430px;width:392px;height:1px;background:#d4d0c8"></div>
<div class="a" style="left:773px;top:414px;width:1px;height:16px;background:#d4d0c8"></div>
<div class="t " style="left:634px;top:417px;color:#000">Global Trigger</div>
<div class="a" style="left:598px;top:209px;width:411px;height:418px;border:1px solid #a8a496"></div>
<div class="a" style="left:598px;top:627px;width:411px;height:6px;background:#ebf2fc"></div>
<div class="a" style="left:598px;top:633px;width:411px;height:54px;border:1px solid #a8a496;background:#ebe7d8"></div>
<div class="t bd" style="left:604px;top:640px;">General</div>
</body></html>
